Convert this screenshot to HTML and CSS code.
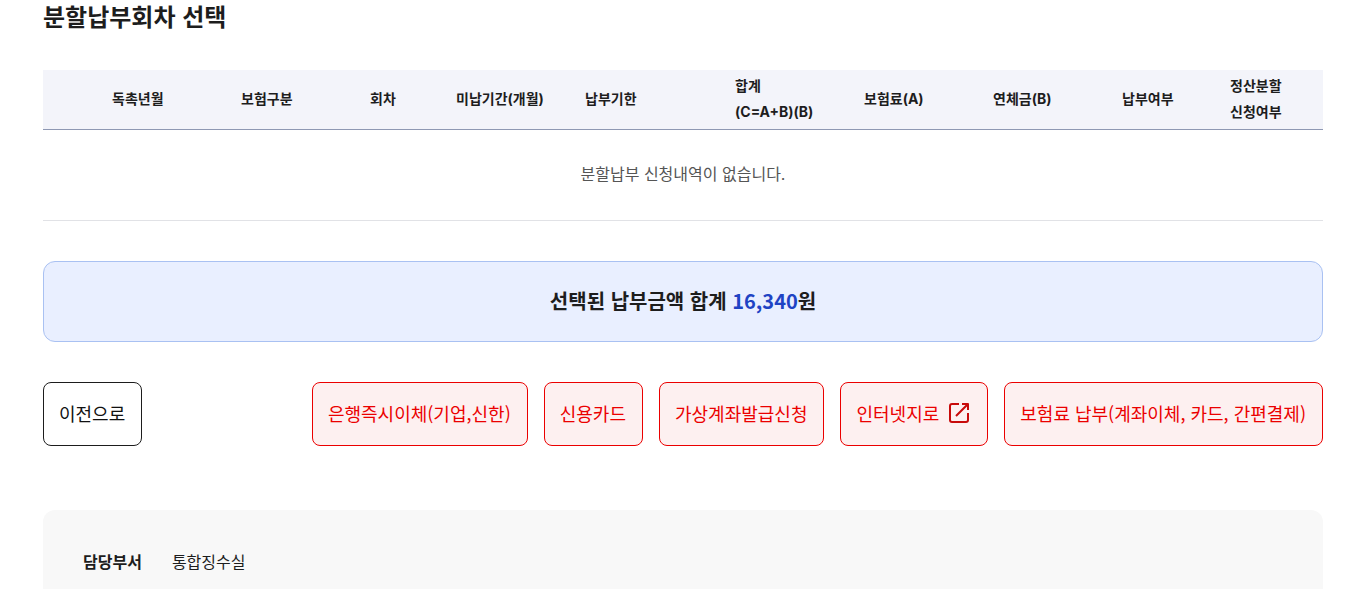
FILE: index.html
```
<!DOCTYPE html>
<html lang="ko">
<head>
    <meta charset="UTF-8">
    <title>분할납부회차 선택</title>
    <link rel="stylesheet" href="styles.css">
</head>
<body>
    <main class="container">
        <h2 class="title">분할납부회차 선택</h2>

        <table class="pay-table">
            <colgroup>
                <col class="col-check">
                <col class="col-mid">
                <col class="col-mid">
                <col class="col-narrow">
                <col class="col-mid">
                <col class="col-wide">
                <col class="col-mid">
                <col class="col-mid">
                <col class="col-mid">
                <col class="col-status">
                <col class="col-last">
            </colgroup>
            <thead>
                <tr>
                    <td></td>
                    <th scope="col">독촉년월</th>
                    <th scope="col">보험구분</th>
                    <th scope="col">회차</th>
                    <th scope="col">미납기간(개월)</th>
                    <th scope="col">납부기한</th>
                    <th scope="col">합계<br>(C=A+B)(B)</th>
                    <th scope="col">보험료(A)</th>
                    <th scope="col">연체금(B)</th>
                    <th scope="col">납부여부</th>
                    <th scope="col">정산분할<br>신청여부</th>
                </tr>
            </thead>
            <tbody>
                <tr>
                    <td class="empty" colspan="11">분할납부 신청내역이 없습니다.</td>
                </tr>
            </tbody>
        </table>

        <p class="total">선택된 납부금액 합계 <span class="amount">16,340</span>원</p>

        <div class="btn-area">
            <button type="button" class="btn btn-prev">이전으로</button>
            <div class="btn-group">
                <button type="button" class="btn btn-pay">은행즉시이체(기업,신한)</button>
                <button type="button" class="btn btn-pay">신용카드</button>
                <button type="button" class="btn btn-pay">가상계좌발급신청</button>
                <button type="button" class="btn btn-pay">
                    인터넷지로
                    <svg class="icon" viewBox="0 0 24 24" aria-hidden="true">
                        <path d="M12 3H5a2 2 0 0 0-2 2v14a2 2 0 0 0 2 2h14a2 2 0 0 0 2-2v-7M15 3h6v6M21 3L9 15"/>
                    </svg>
                </button>
                <button type="button" class="btn btn-pay">보험료 납부(계좌이체, 카드, 간편결제)</button>
            </div>
        </div>

        <dl class="dept">
            <dt>담당부서</dt>
            <dd>통합징수실</dd>
        </dl>
    </main>
</body>
</html>
```

FILE: styles.css
```
* {
    box-sizing: border-box;
}
body {
    margin: 0;
    font-family: Inter, "Noto Sans CJK KR", sans-serif;
    font-size: 16px;
    color: #1d1d1d;
    background: #fff;
}
.container {
    padding: 0 26px 0 43px;
}
.title {
    margin: 0 0 38px;
    font-family: "Noto Sans CJK KR", sans-serif;
    font-size: 24px;
    line-height: 32px;
}
.pay-table {
    width: 100%;
    table-layout: fixed;
    border-collapse: separate;
    border-spacing: 0;
}
.col-check {
    width: 69px;
}
.col-mid {
    width: 129px;
}
.col-narrow {
    width: 86px;
}
.col-wide {
    width: 150px;
}
.col-status {
    width: 108px;
}
.col-last {
    width: 93px;
}
.pay-table thead th,
.pay-table thead td {
    padding: 3px 0 4px;
    background: #f3f4fa;
    border-bottom: 1px solid #8e98b3;
    font-size: 14px;
    line-height: 26px;
    text-align: left;
    white-space: nowrap;
}
.pay-table .empty {
    padding: 29px 0 31px;
    border-bottom: 1px solid #e1e2e6;
    color: #555;
    line-height: 30px;
    text-align: center;
}
.total {
    margin: 40px 0;
    padding: 23px 24px 25px;
    border: 1px solid #a9c1f2;
    border-radius: 12px;
    background: #e9efff;
    font-family: "Noto Sans CJK KR", sans-serif;
    font-size: 20px;
    font-weight: bold;
    line-height: 31px;
    text-align: center;
}
.amount {
    color: #1f43c4;
}
.btn-area,
.btn-group {
    display: flex;
    justify-content: space-between;
    gap: 16px;
}
.btn {
    display: flex;
    align-items: center;
    gap: 8px;
    height: 64px;
    padding: 0 16px 2px 15px;
    border: 1px solid #1d1d1d;
    border-radius: 8px;
    background: #fff;
    color: #111;
    font-family: "Noto Sans CJK KR", sans-serif;
    font-size: 18px;
    white-space: nowrap;
    cursor: pointer;
}
.btn-pay {
    border-color: #eb0000;
    background: #fdf0f0;
    color: #eb0000;
}
.icon {
    width: 24px;
    height: 24px;
    fill: none;
    stroke: #c80a0a;
    stroke-width: 2;
    stroke-linejoin: round;
}
.dept {
    display: flex;
    gap: 30px;
    margin: 64px 0 0;
    padding: 40px;
    border-radius: 12px;
    background: #f8f8f8;
    line-height: 24px;
}
.dept dt {
    font-weight: bold;
}
.dept dd {
    margin: 0;
}
```
